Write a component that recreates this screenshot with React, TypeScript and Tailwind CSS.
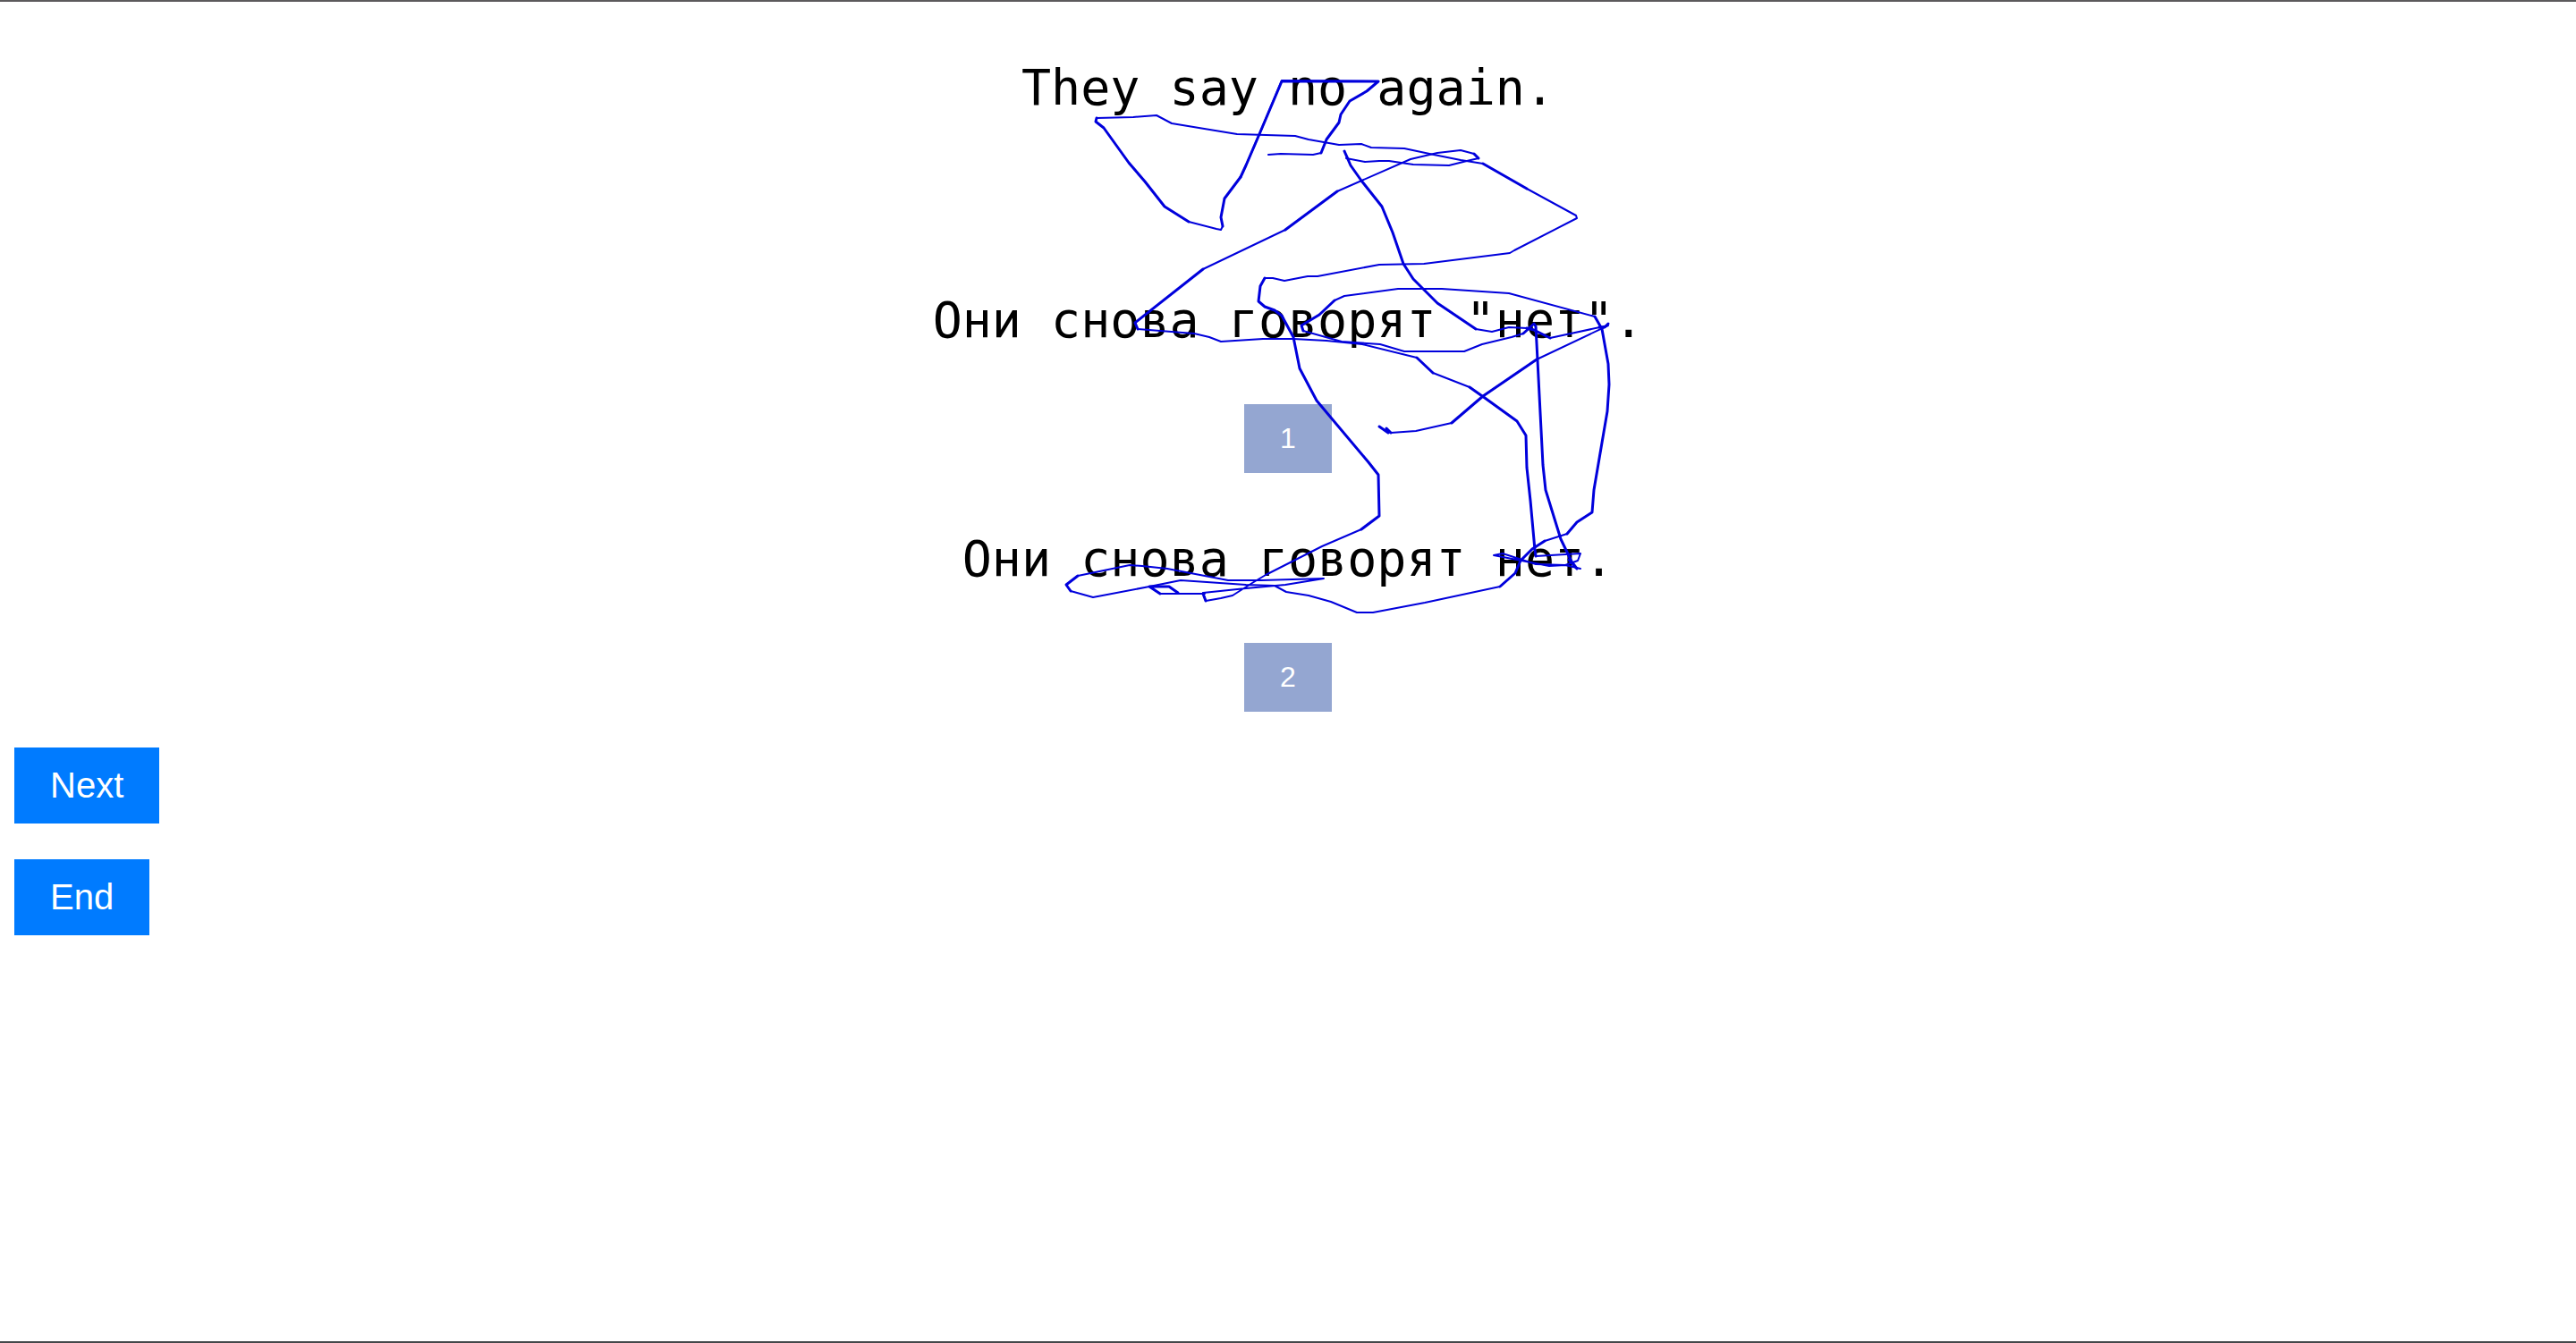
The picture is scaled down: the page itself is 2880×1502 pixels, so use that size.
const thinStrokes = [
  '1418,173 1432,172 1468,173 1477,171',
  '1541,91 1433,90 1408,150 1393,185 1387,198',
  '1367,253 1365,257 1360,256 1329,248',
  '1226,132 1267,131 1293,129 1310,138 1383,150 1448,152 1463,156 1497,162 1522,161 1533,165 1570,166 1603,173 1633,179 1658,183',
  '1707,211 1762,241 1763,244 1693,280 1688,283 1592,295 1542,296 1473,309 1462,309 1436,314 1423,311 1414,311',
  '1522,592 1478,611 1415,643 1400,652 1378,666 1365,669 1348,672 1345,663 1393,658 1437,654 1480,647 1410,649 1373,649 1305,636 1277,633 1263,632 1205,644',
  '1197,661 1222,668 1285,656 1320,649 1393,654 1425,655 1438,662 1463,666 1488,673 1517,685 1535,685 1593,674 1677,656',
  '1783,354 1687,328 1612,323 1563,323 1503,331 1492,336',
  '1457,370 1500,382 1543,385 1570,393 1637,393 1657,385 1690,377 1703,373',
  '1643,433 1602,417',
  '1584,400 1523,385 1483,381 1446,379 1412,379 1365,382 1352,377 1335,373 1272,368',
  '1345,301 1437,257',
  '1495,214 1577,178 1607,171 1633,168 1648,172',
  '1653,177 1640,180 1620,185 1580,184 1553,180 1542,180 1526,181 1505,177',
  '1650,368 1668,371 1687,366 1707,367',
  '1733,378 1798,364 1718,402',
  '1623,473 1583,482 1555,484',
  '1717,622 1767,619 1764,627 1750,632 1732,633 1670,621 1680,619 1717,631 1750,632 1767,636',
  '1297,664 1347,664',
  '1727,605 1752,597',
];

const thickStrokes = [
  '1477,171 1483,156 1497,137 1499,128 1509,113 1528,102 1541,91 1433,91 1408,150 1393,185 1387,198',
  '1387,198 1369,222 1365,243 1367,253',
  '1329,248 1302,231 1280,203 1262,182 1234,143 1225,136 1226,132',
  '1658,183 1707,211',
  '1414,311 1409,320 1407,337 1414,343 1425,347 1433,353 1446,377 1453,412 1472,448 1530,517 1541,531 1542,577 1522,592',
  '1348,672 1345,664',
  '1205,644 1192,654 1197,661',
  '1297,664 1285,656 1307,656 1317,663',
  '1677,656 1694,641 1700,627 1713,614 1727,605',
  '1752,597 1763,584 1780,573 1782,548 1797,460 1799,430 1798,407 1791,368 1783,354',
  '1492,336 1475,352 1455,364 1457,370',
  '1703,373 1715,362 1717,365 1719,403 1725,520 1728,548 1745,603 1757,628 1763,636 1754,626',
  '1717,622 1716,615 1711,560 1707,523 1706,487 1696,471 1660,445 1643,433',
  '1602,417 1584,400',
  '1272,368 1269,361 1345,301',
  '1437,257 1495,214',
  '1648,172 1653,177',
  '1508,180 1503,169 1510,185 1522,202 1545,231 1557,260 1569,295 1580,312 1607,339 1650,368',
  '1707,367 1715,369 1725,374 1733,378',
  '1718,402 1658,443 1623,473',
  '1555,484 1550,479 1552,484 1542,477',
  '1798,362 1794,366 1788,366',
];

function GazeTrace() {
  return (
    <svg
      className="pointer-events-none absolute top-0 left-1/2 h-[700px] w-[800px] -translate-x-1/2"
      viewBox="1040 2 800 700"
      fill="none"
      stroke="#0000dc"
      strokeLinecap="round"
      strokeLinejoin="round"
      aria-hidden="true"
    >
      <g strokeWidth={2}>
        {thinStrokes.map((points) => (
          <polyline key={points} points={points} />
        ))}
      </g>
      <g strokeWidth={3}>
        {thickStrokes.map((points) => (
          <polyline key={points} points={points} />
        ))}
      </g>
    </svg>
  );
}

const sentence = 'font-[Consolas,"DejaVu_Sans_Mono",monospace] text-[55px] leading-[68px]';
const choice =
  'mt-[60px] bg-[#94a6d1] px-10 py-5 text-[32px] leading-[37px] text-white';
const action = 'bg-[#007bff] px-10 py-5 text-[40px] leading-[45px] text-white';

export default function App() {
  return (
    <main className="relative min-h-screen border-y-2 border-t-[#5c5a5c] border-b-[#44484a] bg-white font-['Liberation_Sans',Arial,sans-serif] text-black">
      <section className="flex flex-col items-center pt-[62px] text-center">
        <p className={sentence}>They say no again.</p>
        <p className={`mt-48 ${sentence}`}>Они снова говорят "нет".</p>
        <button type="button" className={choice}>1</button>
        <p className={`mt-[62px] ${sentence}`}>Они снова говорят нет.</p>
        <button type="button" className={choice}>2</button>
      </section>
      <div className="flex flex-col items-start gap-10 px-4 pt-10">
        <button type="button" className={action}>Next</button>
        <button type="button" className={action}>End</button>
      </div>
      <GazeTrace />
    </main>
  );
}
